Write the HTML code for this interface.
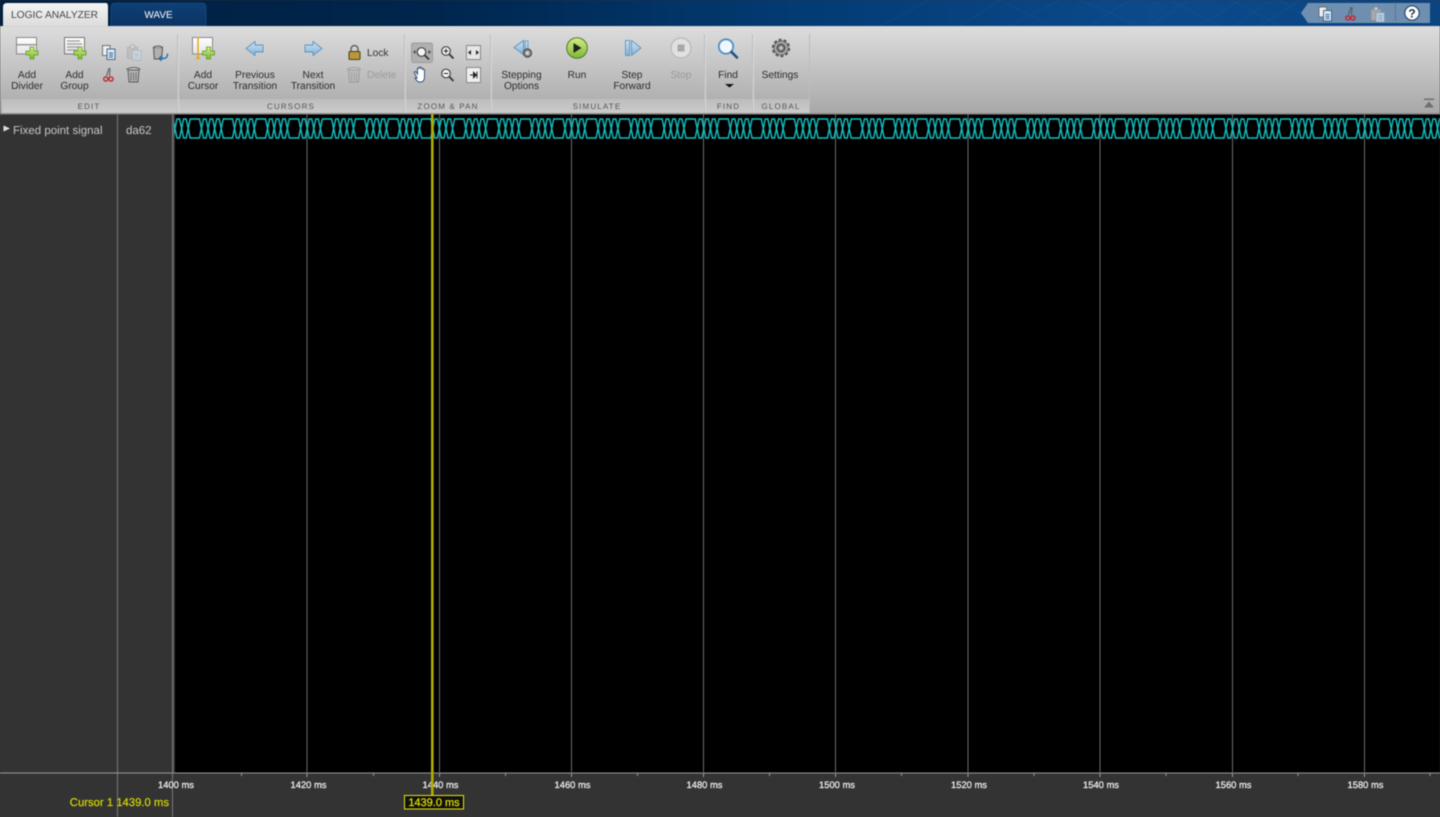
<!DOCTYPE html>
<html lang="en">
<head>
<meta charset="utf-8">
<title>Logic Analyzer</title>
<style>
html,body{margin:0;padding:0;background:#333;width:1440px;height:817px;overflow:hidden}
svg{display:block;position:absolute;left:0;top:0;filter:blur(.4px)}
text{font-family:"Liberation Sans",sans-serif;text-rendering:geometricPrecision}
.t{font-size:10.2px;fill:#2c2c2c;text-anchor:middle}
.d{font-size:10.2px;fill:#9a9a9a;text-anchor:middle}
.g{font-size:8px;fill:#555;text-anchor:middle;letter-spacing:1.15px}
.a{font-size:9.400px;fill:#e8e8e8;text-anchor:middle;stroke:#e8e8e8;stroke-width:.3px}
</style>
</head>
<body>
<svg width="1440" height="817" viewBox="0 0 1440 817" xmlns="http://www.w3.org/2000/svg">
<defs>
<linearGradient id="top" x1="0" x2="1" y1="0" y2="0">
<stop offset="0" stop-color="#001f3f"/><stop offset=".3" stop-color="#00264d"/><stop offset=".55" stop-color="#033b73"/><stop offset=".8" stop-color="#0c4a8c"/><stop offset="1" stop-color="#0a4582"/>
</linearGradient>
<linearGradient id="tb" x1="0" x2="0" y1="0" y2="1"><stop offset="0" stop-color="#dddddd"/><stop offset="1" stop-color="#a8a8a8"/></linearGradient>
<linearGradient id="strip" x1="0" x2="0" y1="0" y2="1"><stop offset="0" stop-color="#bdbdbd"/><stop offset="1" stop-color="#cbcbcb"/></linearGradient>
<linearGradient id="tab" x1="0" x2="0" y1="0" y2="1"><stop offset="0" stop-color="#f4f4f4"/><stop offset="1" stop-color="#dcdcdc"/></linearGradient>
<linearGradient id="tab2" x1="0" x2="0" y1="0" y2="1"><stop offset="0" stop-color="#0e3f75"/><stop offset="1" stop-color="#0b3464"/></linearGradient>
<linearGradient id="green" x1="0" x2="0" y1="0" y2="1"><stop offset="0" stop-color="#d2ee86"/><stop offset="1" stop-color="#7cb832"/></linearGradient>
<linearGradient id="blu" x1="0" x2="0" y1="0" y2="1"><stop offset="0" stop-color="#cfe4f5"/><stop offset="1" stop-color="#7fb0d8"/></linearGradient>
<linearGradient id="page" x1="0" x2="0" y1="0" y2="1"><stop offset="0" stop-color="#fff"/><stop offset="1" stop-color="#e4e4e4"/></linearGradient>
<pattern id="wave" patternUnits="userSpaceOnUse" x="171.7" y="114" width="33.05" height="30">
<path d="M-1 5H1.3L5.3 24H7.9L11.9 5H14.5L18.5 24H27.75L31.75 5H34" fill="none" stroke="#14c2c2" stroke-width="1.4"/>
<path d="M-1 24H1.3L5.3 5H7.9L11.9 24H14.5L18.5 5H27.75L31.75 24H34" fill="none" stroke="#14c2c2" stroke-width="1.4"/>
</pattern>
<g id="plus"><path d="M-2-6h4v4h4v4h-4v4h-4v-4h-4v-4h4z" fill="url(#green)" stroke="#5f9a2a" stroke-width=".8"/></g>
<g id="copy"><rect x="0" y="0" width="7.500" height="10" fill="#eee" stroke="#666" stroke-width=".9"/><rect x="4.500" y="3.500" width="8" height="10.500" fill="#dbe8f4" stroke="#33608c" stroke-width=".9"/><path d="M6.500 7.500h4M6.500 9.500h4M6.500 11.500h4" stroke="#33608c" stroke-width=".9"/></g>
<g id="cut"><path d="M5.500 0L4 8M6.500 0L7 8" stroke="#555" stroke-width="1" fill="none" transform="rotate(8 5 4)"/><circle cx="2.800" cy="11" r="2.100" fill="none" stroke="#c4262e" stroke-width="1.400"/><circle cx="8" cy="11" r="2.100" fill="none" stroke="#c4262e" stroke-width="1.400"/></g>
<g id="paste"><rect x="0" y="2" width="10" height="11.500" rx="1" fill="#b9b4a8" stroke="#8a8a8a" stroke-width=".8"/><rect x="3" y="0" width="4" height="3.500" fill="#ddd" stroke="#888" stroke-width=".7"/><rect x="5" y="5.500" width="8.500" height="9.500" fill="#d6e4f0" stroke="#7d9dbb" stroke-width=".8"/><path d="M7 8.500h4.500M7 10.500h4.500M7 12.500h4.500" stroke="#7d9dbb" stroke-width=".8"/></g>
<g id="trash"><path d="M1.500 3h11l-1 12h-9z" fill="#b5b5b5" stroke="#555" stroke-width=".9"/><path d="M0 2.500C3 0 11 0 14 2.500" fill="#ddd" stroke="#555" stroke-width="1"/><path d="M4.500 5.500v8M7 5.500v8M9.500 5.500v8" stroke="#666" stroke-width=".9"/></g>
<g id="mag"><circle cx="0" cy="0" r="4.300" fill="#f4f4f4" stroke="#444" stroke-width="1.200"/><path d="M3.300 3.300L7.500 7.500" stroke="#333" stroke-width="1.800"/></g>
</defs>

<!-- title band -->
<rect x="0" y="0" width="1440" height="26" fill="url(#top)"/>
<g stroke="#3a75b0" stroke-width=".6" opacity=".22" fill="none">
<path d="M880 26L930 0M960 26L1000 0M1010 26L1060 0M1090 26L1130 0M1150 26L1190 0M1200 26L1240 0M1235 26L1270 0M1260 26L1300 0M1000 0L1050 26M1080 0L1140 26M1170 0L1220 26M1230 0L1280 26M1280 0L1320 26"/>
</g>
<path d="M3 26V7q0-4 4-4h99q2 0 2 4v19z" fill="url(#tab)"/>
<path d="M111 26V7q0-4 4-4h87q4 0 4 4v19z" fill="url(#tab2)" stroke="#1d5590" stroke-width=".6"/>
<text x="54.500" y="18" font-size="10.200" fill="#444" text-anchor="middle">LOGIC ANALYZER</text>
<text x="158.500" y="18" font-size="10" fill="#fff" text-anchor="middle">WAVE</text>

<!-- quick access -->
<path d="M1301 13L1308 3H1430V23H1308z" fill="#6f8fb0"/>
<use href="#copy" transform="translate(1319 7)"/>
<use href="#cut" transform="translate(1345 7)"/>
<use href="#paste" transform="translate(1371 7) " opacity=".75"/>
<path d="M1395.500 4v18" stroke="#44607c" stroke-dasharray="1.500 1.500"/>
<circle cx="1412" cy="13" r="7.200" fill="#fdfdfd" stroke="#27496e" stroke-width="1.200"/>
<text x="1412" y="17.500" font-size="12" font-weight="bold" fill="#1b2f44" text-anchor="middle">?</text>

<!-- toolstrip -->
<rect x="0" y="26" width="1440" height="87" fill="url(#tb)"/>
<rect x="0" y="26" width="1440" height="1" fill="#d4d4d4"/>
<rect x="2" y="99" width="807" height="14" fill="url(#strip)"/>
<g stroke="#bcbcbc" stroke-width="1"><path d="M177.500 34V113M404.500 34V113M490.500 34V113M704.500 34V113M752.500 34V113M809.500 34V113"/></g>
<g stroke="#e2e2e2" stroke-width="1" opacity=".7"><path d="M178.500 34V113M405.500 34V113M491.500 34V113M705.500 34V113M753.500 34V113"/></g>
<path d="M1424 98.500h10v1.500h-10zM1429 101.500l5 6h-10z" fill="#6f6f6f"/>

<!-- edit icons -->
<rect x="16.500" y="37.500" width="20" height="16.500" fill="url(#page)" stroke="#888"/>
<rect x="17" y="44" width="19" height="1.500" fill="#999"/>
<use href="#plus" transform="translate(32 53)"/>
<rect x="64.500" y="37.500" width="20" height="16.500" fill="url(#page)" stroke="#777"/>
<path d="M67 41h13M67 44h15M67 47h13M67 50h10" stroke="#999" stroke-width="1.200"/>
<use href="#plus" transform="translate(80 53)"/>
<use href="#copy" transform="translate(102.500 45.500)"/>
<use href="#paste" transform="translate(127.500 45) " opacity=".5"/>
<g transform="translate(153 45)"><path d="M.5 2.500h9l-.8 11.500h-7.400z" fill="#b0b0b0" stroke="#555"/><path d="M0 2.500C3 .5 7 .5 10 2.500" stroke="#555" fill="#d8d8d8"/><path d="M14.500 8.500v1a4 4 0 0 1-4 4H6M6 13.500l2.500-2.500M6 13.500l2.500 2.200" fill="none" stroke="#2d6ca8" stroke-width="1.400"/></g>
<use href="#cut" transform="translate(103 68)"/>
<use href="#trash" transform="translate(126.500 67)"/>
<text class="t" x="27" y="78">Add</text><text class="t" x="27" y="89">Divider</text>
<text class="t" x="74.500" y="78">Add</text><text class="t" x="74.500" y="89">Group</text>
<text class="g" x="89" y="109">EDIT</text>

<!-- cursors icons -->
<rect x="192.500" y="37.500" width="20" height="16.500" fill="url(#page)" stroke="#888"/>
<path d="M198 37V58" stroke="#e6a61e" stroke-width="1.500"/><path d="M195 59h6l-3-3z" fill="#e6a61e"/>
<use href="#plus" transform="translate(208.500 53)"/>
<path d="M246 48.500l9-7v3.500h8v7h-8v3.500z" fill="url(#blu)" stroke="#5f93bd" stroke-width=".9"/>
<path d="M322 48.500l-9-7v3.500h-8v7h8v3.500z" fill="url(#blu)" stroke="#5f93bd" stroke-width=".9"/>
<path d="M351 51.500v-2.500a3.500 3.500 0 0 1 7 0v2.500" fill="none" stroke="#555" stroke-width="1.300"/>
<rect x="349" y="51.500" width="11" height="8" rx="1" fill="#b8973a" stroke="#4a3e18"/>
<text x="367" y="56" font-size="10.200" fill="#333">Lock</text>
<use href="#trash" transform="translate(347 67)" opacity=".35"/>
<text x="367" y="78" font-size="10.200" fill="#9a9a9a">Delete</text>
<text class="t" x="203" y="78">Add</text><text class="t" x="203" y="89">Cursor</text>
<text class="t" x="255" y="78">Previous</text><text class="t" x="255" y="89">Transition</text>
<text class="t" x="313" y="78">Next</text><text class="t" x="313" y="89">Transition</text>
<text class="g" x="291" y="109">CURSORS</text>

<!-- zoom pan -->
<rect x="411.500" y="43" width="21" height="19.500" rx="2" fill="#b0b0b0" stroke="#9c9c9c"/>
<use href="#mag" transform="translate(421.500 52)"/>
<path d="M413 52l2.500-2v4zM431 52l-2.500-2v4z" fill="#444"/>
<use href="#mag" transform="translate(446 51)"/><path d="M443.800 51h4.400M446 48.800v4.400" stroke="#222" stroke-width="1"/>
<use href="#mag" transform="translate(446 73.500)"/><path d="M443.800 73.500h4.400" stroke="#222" stroke-width="1"/>
<rect x="466.500" y="45.500" width="14" height="14" fill="#e6e6e6" stroke="#888"/>
<path d="M468 52.500l3-2.500v5zM479 52.500l-3-2.500v5z" fill="#222"/>
<rect x="466.500" y="67.500" width="14" height="15" fill="#efefef" stroke="#888"/>
<path d="M470 75h3M476.500 75l-3-2.800v5.600zM477 71.500v7" stroke="#222" fill="#222" stroke-width=".9"/>
<path d="M417 78l-2.500-5c-.6-1.300.8-2 1.600-1l1.400 2v-5c0-1.300 1.600-1.300 1.700 0v-1c0-1.300 1.800-1.300 1.800 0v1c.2-1.200 1.800-1.200 1.800 0v1c.2-1.100 1.700-1 1.700.2V77c0 3-1.500 5-3.500 5h-2c-1.500 0-2.500-2-4-4z" fill="#fff" stroke="#2d4f78" stroke-width="1"/>
<text class="g" x="448" y="109">ZOOM &amp; PAN</text>

<!-- simulate -->
<path d="M514 47.500l9.500-7v14z" fill="url(#blu)" stroke="#5f93bd"/>
<rect x="525" y="41" width="3" height="12" fill="url(#blu)" stroke="#5f93bd" stroke-width=".8"/>
<circle cx="527.500" cy="53" r="4" fill="#999" stroke="#444" stroke-width="1.200"/><circle cx="527.500" cy="53" r="1.300" fill="#eee"/>
<circle cx="577" cy="48" r="10.300" fill="url(#green)" stroke="#55752e" stroke-width="1"/>
<path d="M573.500 43l8 5-8 5z" fill="#222"/>
<rect x="625.500" y="40.500" width="4" height="15" fill="url(#blu)" stroke="#5f93bd" stroke-width=".9"/>
<path d="M631.500 40.500l9.500 7.500-9.500 7.500z" fill="url(#blu)" stroke="#5f93bd" stroke-width=".9"/>
<circle cx="681" cy="48" r="10" fill="#e0e0e0" stroke="#bcbcbc" stroke-width="1.400"/>
<rect x="677.500" y="44.500" width="7" height="7" fill="#a8a8a8"/>
<text class="t" x="521.500" y="78">Stepping</text><text class="t" x="521.500" y="89">Options</text>
<text class="t" x="577" y="78">Run</text>
<text class="t" x="632" y="78">Step</text><text class="t" x="632" y="89">Forward</text>
<text class="d" x="681" y="78">Stop</text>
<text class="g" x="597" y="109">SIMULATE</text>

<!-- find -->
<circle cx="726" cy="46.500" r="7.200" fill="#f1f7fc" stroke="#4a90c8" stroke-width="1.800"/>
<path d="M731.500 52l5.500 5.500" stroke="#1f4f7e" stroke-width="2.600" stroke-linecap="round"/>
<text class="t" x="728" y="78">Find</text>
<path d="M725 84h9l-4.500 3.500z" fill="#111"/>
<text class="g" x="728.500" y="109">FIND</text>

<!-- global -->
<circle cx="781" cy="48" r="7.500" fill="none" stroke="#555" stroke-width="3.400" stroke-dasharray="2.800 1.900"/>
<circle cx="781" cy="48" r="7" fill="#aaa" stroke="#666" stroke-width="1"/>
<circle cx="781" cy="48" r="4" fill="#777" stroke="#444" stroke-width="1"/>
<circle cx="781" cy="48" r="1.700" fill="#ccc"/>
<text class="t" x="780" y="78">Settings</text>
<text class="g" x="781" y="109">GLOBAL</text>

<!-- main -->
<rect x="0" y="113" width="1440" height="704" fill="#333"/>
<rect x="0" y="113" width="1440" height="1.500" fill="#8a8a8a"/>
<rect x="175" y="114.500" width="1265" height="658" fill="#000"/>
<g stroke="#6c6c6c" stroke-width="1"><path d="M307 114V772M439.500 114V772M571.500 114V772M703.500 114V772M835.500 114V772M968 114V772M1100 114V772M1232.500 114V772M1364.500 114V772"/></g>
<rect x="172" y="114.500" width="1268" height="30" fill="url(#wave)"/>
<g stroke="#777" stroke-width="1"><path d="M117.500 114V817M172.500 114V817"/></g>
<path d="M173.500 114V772" stroke="#555"/>
<path d="M3.500 125.500l6.500 3-6.500 3z" fill="#e0e0e0"/>
<text x="13" y="134" font-size="11.500" fill="#c8c8c8">Fixed point signal</text>
<text x="126" y="134" font-size="11.500" fill="#c8c8c8">da62</text>

<!-- axis -->
<rect x="0" y="772.500" width="1440" height="1" fill="#9a9a9a"/>
<g stroke="#9a9a9a" stroke-width="1"><path d="M241.500 773v3M373.500 773v3M505.500 773v3M637.500 773v3M769.500 773v3M901.500 773v3M1034 773v3M1166 773v3M1298 773v3M1430 773v3M307 773v4M439.500 773v4M571.500 773v4M703.500 773v4M835.500 773v4M968 773v4M1100 773v4M1232.500 773v4M1364.500 773v4"/></g>
<text class="a" x="176" y="788">1400 ms</text>
<text class="a" x="308.500" y="788">1420 ms</text>
<text class="a" x="440.500" y="788">1440 ms</text>
<text class="a" x="572.500" y="788">1460 ms</text>
<text class="a" x="704.500" y="788">1480 ms</text>
<text class="a" x="837" y="788">1500 ms</text>
<text class="a" x="969" y="788">1520 ms</text>
<text class="a" x="1101" y="788">1540 ms</text>
<text class="a" x="1233.500" y="788">1560 ms</text>
<text class="a" x="1365.500" y="788">1580 ms</text>

<!-- cursor -->
<rect x="431" y="114" width="2.600" height="681" fill="#b3ad00"/>
<rect x="404.500" y="795.500" width="59" height="13.500" fill="#111" stroke="#e6e600" stroke-width="1"/>
<text x="434" y="806" font-size="11" fill="#e6e600" text-anchor="middle" stroke="#e6e600" stroke-width=".2">1439.0 ms</text>
<text x="169" y="806" font-size="11.300" fill="#d8d800" text-anchor="end" stroke="#d8d800" stroke-width=".2">Cursor 1 1439.0 ms</text>
</svg>
</body>
</html>
